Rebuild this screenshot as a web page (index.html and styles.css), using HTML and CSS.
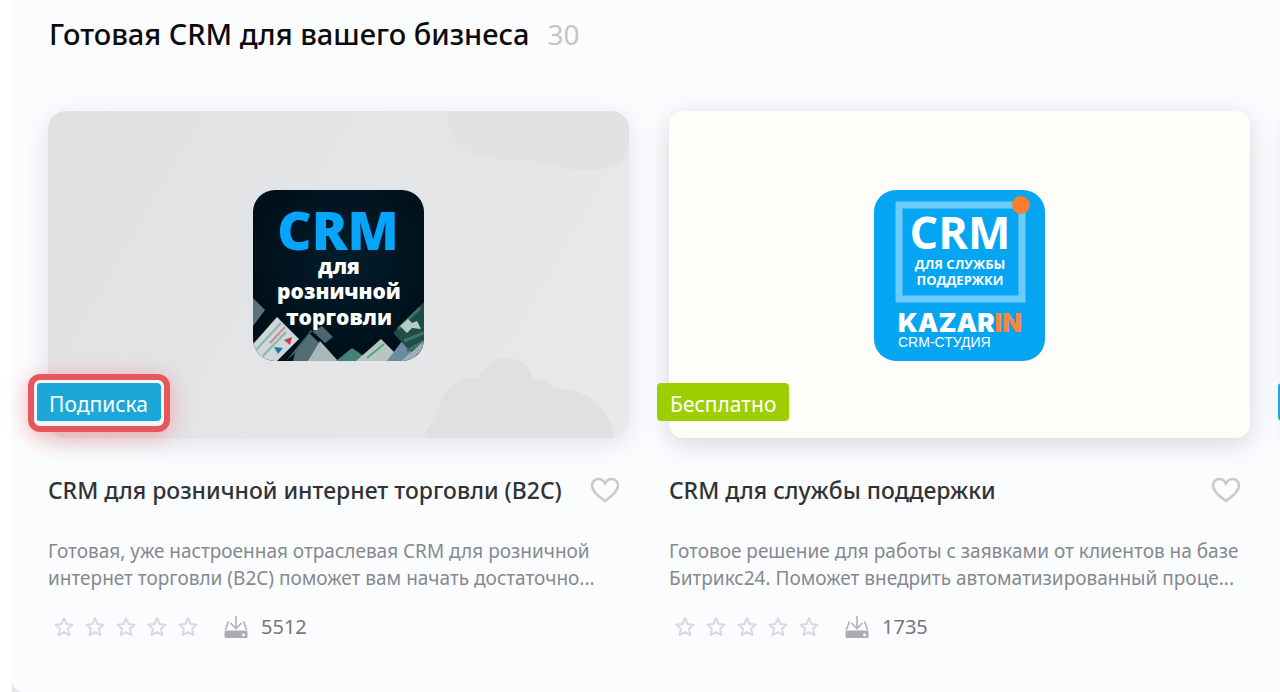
FILE: index.html
```html
<!DOCTYPE html>
<html lang="ru">
<head>
<meta charset="utf-8">
<title>Готовая CRM для вашего бизнеса</title>
<link rel="stylesheet" href="styles.css">
</head>
<body>
<svg class="defs" width="0" height="0" aria-hidden="true">
  <symbol id="star" viewBox="0 0 22 22"><path d="M11 2.200 13.500 8l6.200.6-4.700 4.200 1.500 6.400L11 16l-5.500 3.200L7 12.800 2.300 8.600 8.500 8z" fill="none" stroke="#d8d9dd" stroke-width="1.900" stroke-linejoin="round"/></symbol>
  <symbol id="heart" viewBox="0 0 30 26"><path d="M15 24C11 21 2 15.500 2 8.500 2 4.500 5 2 8.300 2c3 0 5.500 1.800 6.700 4.800C16.200 3.800 18.700 2 21.700 2 25 2 28 4.500 28 8.500c0 7-9 12.500-13 15.500z" fill="none" stroke="#c9cacc" stroke-width="2.600" stroke-linejoin="round"/></symbol>
  <symbol id="download" viewBox="0 0 24 24"><path d="M12 1v12M6.500 8l5.500 5.500L17.500 8M4.500 6.500 1.300 15M19.500 6.500l3.200 8.500" fill="none" stroke="#b0b2b6" stroke-width="1.600"/><path d="M2 15.500h20a1.500 1.500 0 0 1 1.500 1.500v4.500A1.500 1.500 0 0 1 22 23H2a1.500 1.500 0 0 1-1.500-1.500V17A1.500 1.500 0 0 1 2 15.500z" fill="#abadb1"/><circle cx="19.500" cy="20" r="1.400" fill="#fff"/></symbol>
</svg>
<main class="panel">
  <header class="heading">
    <h1 class="heading-title">Готовая CRM для вашего бизнеса</h1>
    <span class="heading-count">30</span>
  </header>
  <div class="cards">
    <article class="card">
      <div class="cover cover-gray">
        <svg class="clouds" viewBox="0 0 581 327" preserveAspectRatio="none" aria-hidden="true">
          <path d="M376 327c4-14 12-20 16-34 5-20 22-26 39-27 5-12 15-18 27-19 14-1 23 8 27 20 10 1 17 5 22 11 30-3 58 22 59 49z" fill="#e0e0e2"/>
          <path d="M402 0h179v35c-4 17-14 23-40 24-32 2-55-14-83-10-36-2-66-19-56-49z" fill="#e1e2e4"/>
        </svg>
        <svg class="logo" viewBox="0 0 171 171" role="img" aria-label="CRM для розничной торговли">
          <defs>
            <clipPath id="round"><rect width="171" height="171" rx="22"/></clipPath>
            <radialGradient id="night" cx=".55" cy=".4" r=".6"><stop offset="0" stop-color="#021d2c"/><stop offset="1" stop-color="#000f19"/></radialGradient>
          </defs>
          <g clip-path="url(#round)">
            <rect width="171" height="171" fill="url(#night)"/>
            <path d="M0 108l12 12-12 16z" fill="#5b7180"/>
            <path d="M0 154l24-27 22 22-22 22H0z" fill="#cfd7da"/>
            <path d="M3 160l25-27M10 166l23-24" stroke="#8bb6a5" stroke-width="2"/>
            <path d="M17 153l15-16" stroke="#cc8999" stroke-width="2"/>
            <path d="M31 150l8-3-2 8z" fill="#c34150"/>
            <path d="M21 157l9 1-5 6z" fill="#147d9b"/>
            <path d="M33 171l25-31 14 13 8-6-11-11-14 8-12 18-10 9z" fill="#4c6670"/>
            <path d="M42 163l14-20 29 28H40z" fill="#536d74"/>
            <path d="M55 171l12-20 18 20z" fill="#aab9b7"/>
            <path d="M83 171l16-13 19 13z" fill="#438078"/>
            <path d="M103 171l25-22 22 22z" fill="#b8c6c3"/>
            <path d="M114 168l17-14" stroke="#50a873" stroke-width="2"/>
            <path d="M134 171l15-20 22 20z" fill="#6b8ba0"/>
            <path d="M140 143l31-31v59l-15-11z" fill="#204c48"/>
            <path d="M145 139l22-21M151 151l20-8M154 161l17-10" stroke="#3a7663" stroke-width="3"/>
            <path d="M147 136l8-7 4 4 5-2 4 8-9-1-5 5z" fill="#b7cbc6"/>
            <path d="M148 171l23-20v7l-14 13z" fill="#9daeb8"/>
          </g>
          <g class="logo-text" text-anchor="middle">
            <text class="brand-large" x="85" y="60">CRM</text>
            <text class="brand-line" x="86" y="84">для</text>
            <text class="brand-line" x="86" y="109">розничной</text>
            <text class="brand-line" x="86" y="135">торговли</text>
          </g>
        </svg>
        <span class="badge badge-blue badge-marked">Подписка</span>
      </div>
      <div class="title-row">
        <h2 class="card-title">CRM для розничной интернет торговли (B2C)</h2>
        <button class="like" type="button" aria-label="В избранное"><svg class="icon-heart"><use href="#heart"/></svg></button>
      </div>
      <p class="description">Готовая, уже настроенная отраслевая CRM для розничной<br>интернет торговли (B2C) поможет вам начать достаточно...</p>
      <div class="stats">
        <div class="stars" role="img" aria-label="Рейтинг: 0 из 5"><svg class="star"><use href="#star"/></svg><svg class="star"><use href="#star"/></svg><svg class="star"><use href="#star"/></svg><svg class="star"><use href="#star"/></svg><svg class="star"><use href="#star"/></svg></div>
        <svg class="icon-download" aria-hidden="true"><use href="#download"/></svg>
        <span class="downloads">5512</span>
      </div>
    </article>
    <article class="card">
      <div class="cover cover-white">
        <svg class="logo" viewBox="0 0 171 171" role="img" aria-label="CRM для службы поддержки">
          <rect width="171" height="171" rx="22" fill="#06a5f2"/>
          <rect x="25" y="15" width="123" height="94" fill="none" stroke="#6ccbf8" stroke-width="7"/>
          <circle cx="147" cy="15" r="9" fill="#f97e2d"/>
          <g class="logo-text" fill="#fff">
            <text class="desk-large" x="86" y="59" text-anchor="middle">CRM</text>
            <text class="desk-line" x="86" y="79" text-anchor="middle">ДЛЯ СЛУЖБЫ</text>
            <text class="desk-line" x="86" y="95" text-anchor="middle">ПОДДЕРЖКИ</text>
            <text class="studio-name" x="24" y="142">KAZAR<tspan fill="#f28a3c">IN</tspan></text>
            <text class="studio-line" x="24" y="157">CRM-СТУДИЯ</text>
          </g>
        </svg>
        <span class="badge badge-green">Бесплатно</span>
      </div>
      <div class="title-row">
        <h2 class="card-title">CRM для службы поддержки</h2>
        <button class="like" type="button" aria-label="В избранное"><svg class="icon-heart"><use href="#heart"/></svg></button>
      </div>
      <p class="description">Готовое решение для работы с заявками от клиентов на базе<br>Битрикс24. Поможет внедрить автоматизированный проце...</p>
      <div class="stats">
        <div class="stars" role="img" aria-label="Рейтинг: 0 из 5"><svg class="star"><use href="#star"/></svg><svg class="star"><use href="#star"/></svg><svg class="star"><use href="#star"/></svg><svg class="star"><use href="#star"/></svg><svg class="star"><use href="#star"/></svg></div>
        <svg class="icon-download" aria-hidden="true"><use href="#download"/></svg>
        <span class="downloads">1735</span>
      </div>
    </article>
    <article class="card" aria-hidden="true">
      <div class="cover cover-white"><span class="badge badge-blue badge-next"></span></div>
    </article>
  </div>
</main>
</body>
</html>
```
FILE: styles.css
```css
* { box-sizing: border-box; }
body {
  margin: 0;
  background: linear-gradient(90deg, #fff 12px, #e3e6e9 12px);
  font-family: "Noto Sans", "Open Sans", sans-serif;
  overflow-x: hidden;
}
.defs { position: absolute; }
.panel {
  min-height: 100vh;
  margin-left: 12px;
  padding: 14px 30px 0 36px;
  background: #fbfcfe;
  border-bottom-left-radius: 12px;
  overflow: clip;
  overflow-clip-margin: 12px;
}
.heading {
  display: flex;
  align-items: center;
  gap: 18px;
  height: 40px;
  padding-left: 1px;
  white-space: nowrap;
}
.heading-title {
  margin: 0;
  font-size: 29px;
  font-weight: 500;
  line-height: 40px;
  color: #0b0b0c;
}
.heading-count {
  font-size: 28px;
  font-weight: 400;
  line-height: 40px;
  color: #c3c4c6;
}
.cards {
  display: grid;
  grid-auto-flow: column;
  grid-auto-columns: calc(50% - 20px);
  gap: 40px;
  margin-top: 57px;
}
.card { min-width: 0; }
.cover {
  position: relative;
  display: flex;
  justify-content: center;
  padding: 79px 0 77px;
  height: 327px;
  border-radius: 14px;
  box-shadow: 0 6px 26px rgba(60, 70, 80, 0.2);
}
.cover-gray {
  border-radius: 18px;
  background: linear-gradient(120deg, #e0e1e3, #e5e6e8 65%, #e8e9eb);
  box-shadow: 0 6px 26px rgba(60, 70, 80, 0.14);
}
.cover-white { background: #fdfefa; }
.clouds {
  position: absolute;
  inset: 0;
  width: 100%;
  height: 100%;
  border-radius: 18px;
}
.logo { position: relative; width: 171px; height: 171px; }
.logo-text { font-family: "Open Sans", sans-serif; font-weight: 700; }
.brand-large { font-size: 53px; font-weight: 800; fill: #06a5fa; }
.brand-line { font-size: 21px; font-weight: 800; fill: #fff; }
.desk-large { font-size: 45px; }
.desk-line { font-size: 13px; }
.studio-name { font-family: Inter, sans-serif; font-size: 26px; font-weight: 900; }
.studio-line { font-family: "Liberation Sans", sans-serif; font-size: 14px; font-weight: 400; }
.badge {
  position: absolute;
  left: -12px;
  bottom: 17px;
  height: 38px;
  padding: 0 13px;
  border-radius: 4px;
  font-size: 21px;
  line-height: 42px;
  color: #fff;
}
.badge-blue { background: #1ba8d9; }
.badge-green { background: #9dcf00; }
.badge-next { width: 126px; }
.badge-marked {
  box-shadow: 0 0 0 3px #f4f5f7;
}
.badge-marked::after {
  content: "";
  position: absolute;
  inset: -9px -9px -11px -8px;
  border: 6px solid #e6575c;
  border-radius: 12px;
  box-shadow: 0 4px 22px rgba(240, 70, 80, 0.4), inset 0 0 0 3px #f4f5f7;
}
.title-row {
  display: flex;
  justify-content: space-between;
  align-items: center;
  height: 36px;
  margin-top: 34px;
  padding-right: 9px;
}
.card-title {
  margin: 0;
  font-size: 23px;
  font-weight: 500;
  line-height: 36px;
  white-space: nowrap;
  color: #303236;
}
.like { display: flex; padding: 0; border: 0; background: none; }
.icon-heart { width: 30px; height: 26px; }
.description {
  margin: 30px 0 0;
  font-size: 19px;
  line-height: 27px;
  white-space: nowrap;
  color: #858990;
}
.stats { display: flex; align-items: center; height: 30px; margin-top: 20px; padding-left: 5px; }
.stars { display: flex; gap: 9px; }
.star { width: 22px; height: 22px; }
.icon-download { width: 24px; height: 24px; margin-left: 25px; }
.downloads { margin-left: 13px; font-size: 20px; line-height: 30px; color: #74777c; }
```
